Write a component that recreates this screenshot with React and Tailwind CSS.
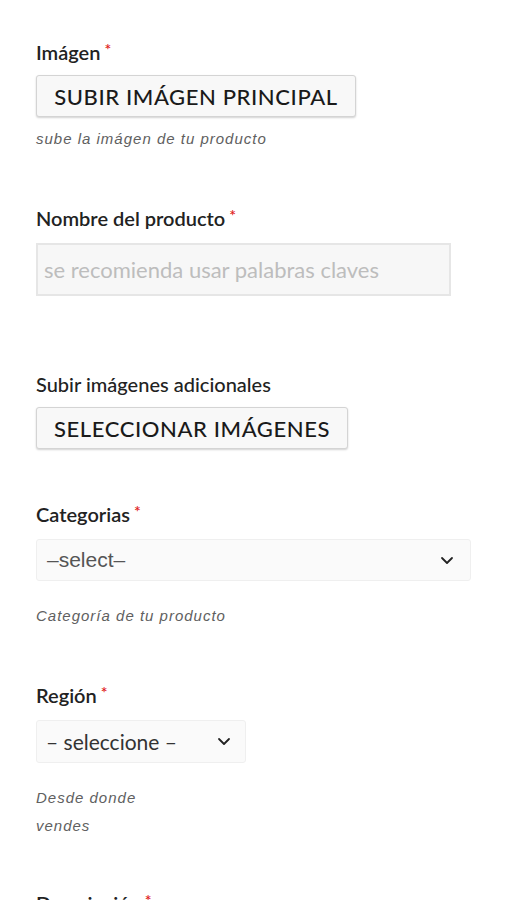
import React from "react";

const Star = () => <span className="text-[#e02020] text-[16px] align-top relative top-[-3px] ml-[4px]">*</span>;

const Chevron = () => (
  <svg width="14" height="9" viewBox="0 0 14 9" fill="none">
    <path d="M2 2l5 5 5-5" stroke="#222" strokeWidth="1.8" strokeLinecap="round" strokeLinejoin="round" />
  </svg>
);

const help = "text-[15px] italic text-[#606060] tracking-[1px] font-['Liberation_Sans',Arial,sans-serif]";
const label = "text-[20px] font-semibold leading-[26px]";
const btn = "h-[42px] rounded-[3px] border border-[#d4d4d4] bg-[#f8f8f8] shadow-[0_1px_2px_rgba(0,0,0,0.18)] text-[22px] font-medium tracking-[0.6px] text-[#1a1a1a] flex items-center justify-center";

export default function App() {
  return (
    <div className="bg-white h-[900px] w-[506px] overflow-hidden pl-[36px] pt-[39px] font-['Lato',sans-serif] text-[#222]">
      {/* Imagen */}
      <div className={label}>Imágen<Star /></div>
      <button className={`mt-[10px] w-[320px] ${btn}`}>SUBIR IMÁGEN PRINCIPAL</button>
      <div className={`mt-[12px] leading-[20px] ${help}`}>sube la imágen de tu producto</div>

      {/* Nombre */}
      <div className={`mt-[56px] ${label}`}>Nombre del producto<Star /></div>
      <div className="mt-[12px] h-[53px] w-[415px] border-2 border-[#e6e6e6] bg-[#f7f7f7] flex items-center pl-[6px] text-[22px] text-[#bdbdbd]">
        se recomienda usar palabras claves
      </div>

      {/* Adicionales */}
      <div className={`mt-[75px] text-[20px] font-medium leading-[26px]`}>Subir imágenes adicionales</div>
      <button className={`mt-[10px] w-[312px] ${btn}`}>SELECCIONAR IMÁGENES</button>

      {/* Categorias */}
      <div className={`mt-[52px] ${label}`}>Categorias<Star /></div>
      <div className="mt-[12px] h-[42px] w-[435px] rounded-[3px] border border-[#efefef] bg-[#fafafa] flex items-center justify-between pl-[10px] pr-[16px]">
        <span className="font-['Liberation_Sans',Arial,sans-serif] text-[21px] text-[#555]">–select–</span>
        <Chevron />
      </div>
      <div className={`mt-[25px] leading-[20px] ${help}`}>Categoría de tu producto</div>

      {/* Region */}
      <div className={`mt-[56px] ${label}`}>Región<Star /></div>
      <div className="mt-[12px] h-[43px] w-[210px] rounded-[3px] border border-[#efefef] bg-[#fafafa] flex items-center justify-between pl-[9px] pr-[14px]">
        <span className="text-[21px] text-[#333]">– seleccione –</span>
        <Chevron />
      </div>
      <div className={`mt-[21px] leading-[28px] ${help}`}>Desde donde<br />vendes</div>

      {/* Descripcion */}
      <div className={`mt-[50px] ${label}`}>Descripción<Star /></div>
    </div>
  );
}
